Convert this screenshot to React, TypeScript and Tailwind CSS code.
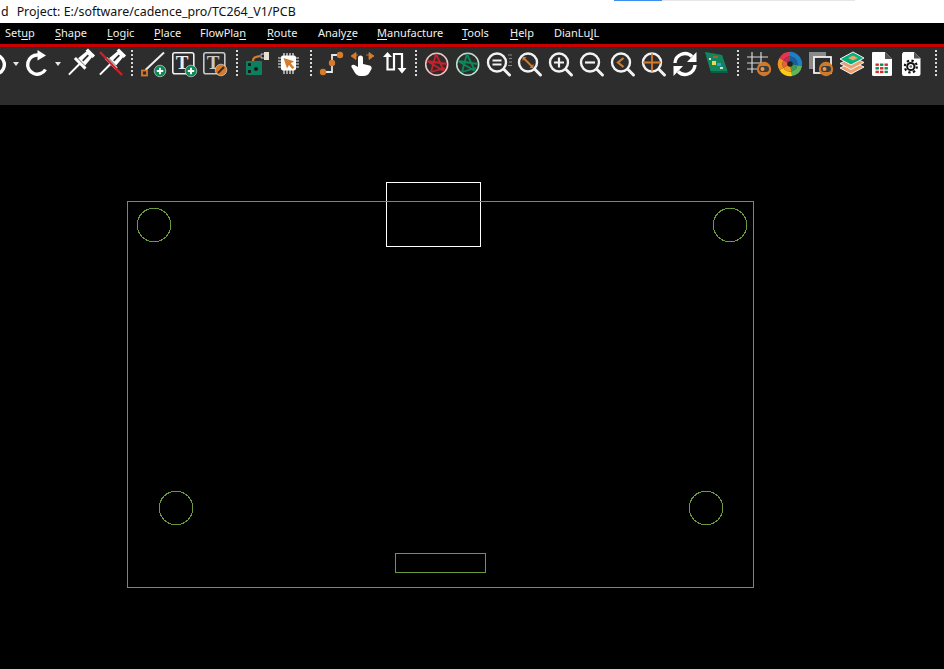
import type { ReactNode } from "react";

const menus = [
  { w: "w-[50px]", before: "Set", key: "u", after: "p" },
  { w: "w-[52px]", before: "", key: "S", after: "hape" },
  { w: "w-[47px]", before: "", key: "L", after: "ogic" },
  { w: "w-[46px]", before: "", key: "P", after: "lace" },
  { w: "w-[67px]", before: "FlowPla", key: "n", after: "" },
  { w: "w-[51px]", before: "", key: "R", after: "oute" },
  { w: "w-[59px]", before: "Analy", key: "z", after: "e" },
  { w: "w-[85px]", before: "", key: "M", after: "anufacture" },
  { w: "w-[48px]", before: "", key: "T", after: "ools" },
  { w: "w-[44px]", before: "", key: "H", after: "elp" },
  { w: "w-[60px]", before: "DianLu", key: "J", after: "L" },
];

const ORANGE = "#d67b2c";
const GREEN = "#0e8a55";

// 31x30 toolbar slot
function Icon({ children }: { children: ReactNode }) {
  return (
    <svg width="31" height="30" viewBox="0 0 31 30" className="shrink-0 overflow-visible">
      {children}
    </svg>
  );
}

function Sep() {
  return (
    <div className="w-[12px] h-[30px] shrink-0 flex justify-center pt-[1px]">
      <div className="w-[2px] h-[26px] bg-[repeating-linear-gradient(to_bottom,#d8d8d8_0,#d8d8d8_2px,transparent_2px,transparent_4px)]" />
    </div>
  );
}

function Caret({ w }: { w: string }) {
  return (
    <div className={`${w} h-[30px] shrink-0 flex justify-center items-center`}>
      <div className="w-0 h-0 border-x-[3px] border-x-transparent border-t-[4px] border-t-[#e8e8e8]" />
    </div>
  );
}

function Pin() {
  return (
    <g transform="rotate(45 15.5 15)">
      <rect x="10.5" y="-2" width="10" height="3.4" fill="#fff" />
      <path d="M11.5 1 H19.5 L20.5 12 H10.5 Z" fill="#fff" />
      <rect x="14.6" y="2.5" width="1.8" height="8" fill="#2d2d2d" />
      <rect x="8" y="12.5" width="15" height="3" fill="#fff" />
      <path d="M15.5 15 V30" stroke="#fff" strokeWidth="2" />
    </g>
  );
}

function Badge({ x, y, children, fill = GREEN }: { x: number; y: number; children: ReactNode; fill?: string }) {
  return (
    <g transform={`translate(${x} ${y})`}>
      <circle r="5.8" fill={fill} stroke="#e8e8e8" strokeWidth="0.6" />
      {children}
    </g>
  );
}

function Toggle({ x, y }: { x: number; y: number }) {
  return (
    <g transform={`translate(${x} ${y})`}>
      <circle r="7.2" fill="#cf7a2a" />
      <rect x="-5" y="-3" width="10" height="6" rx="3" fill="#3a3a3a" />
      <circle cx="-1.5" r="2" fill="#e89a50" />
    </g>
  );
}

function TBox({ stroke }: { stroke: string }) {
  return (
    <>
      <rect x="3.8" y="3.8" width="21" height="21" rx="2" fill="none" stroke={stroke} strokeWidth="1.6" />
      <text x="13" y="20" textAnchor="middle" fontFamily="Liberation Serif, serif" fontWeight="700" fontSize="19" fill={stroke}>
        T
      </text>
    </>
  );
}

function Net({ ring, line }: { ring: string; line: string }) {
  return (
    <>
      <circle cx="14.7" cy="15.3" r="11" fill="none" stroke={ring} strokeWidth="1.5" />
      <path d="M14 5 L22 22 M14 5 L9 23 M5 12 L25 15 M9 23 L23 19 M5 12 L22 22" fill="none" stroke={line} strokeWidth="1.8" />
    </>
  );
}

// magnifier frame shared by the zoom buttons
function Lens({ children }: { children?: ReactNode }) {
  return (
    <>
      <circle cx="13" cy="13.5" r="9" fill="none" stroke="#f2f2f2" strokeWidth="2.4" />
      <path d="M19.8 20.3 L25.5 26" stroke="#f2f2f2" strokeWidth="3" strokeLinecap="round" />
      {children}
    </>
  );
}

function wedge(r0: number, r1: number, a0: number, a1: number) {
  const p = (r: number, a: number) => {
    const t = ((a - 90) * Math.PI) / 180;
    return `${(15 + r * Math.cos(t)).toFixed(2)} ${(15 + r * Math.sin(t)).toFixed(2)}`;
  };
  return `M${p(r0, a0)} L${p(r1, a0)} A${r1} ${r1} 0 0 1 ${p(r1, a1)} L${p(r0, a1)} A${r0} ${r0} 0 0 0 ${p(r0, a0)} Z`;
}

const wheel = [
  { a: 0, b: 100, outer: "#1f7fc4", inner: "#15609a" },
  { a: 100, b: 170, outer: "#62b45a", inner: "#3c9a5a" },
  { a: 170, b: 240, outer: "#fbc918", inner: "#f09a1e" },
  { a: 240, b: 300, outer: "#f39222", inner: "#e8603a" },
  { a: 300, b: 360, outer: "#e8344c", inner: "#c02a5c" },
];

function ColorWheel() {
  return (
    <>
      {wheel.map((s) => (
        <g key={s.a}>
          <path d={wedge(7.5, 12.2, s.a, s.b)} fill={s.outer} />
          <path d={wedge(2, 7.5, s.a, s.b)} fill={s.inner} />
        </g>
      ))}
      <circle cx="15" cy="15" r="2.8" fill="#222" />
    </>
  );
}

const sheetColors = ["#d62b2b", "#0e8a55", "#d62b2b", "#0e8a55", "#d62b2b", "#0e8a55", "#d62b2b", "#d62b2b", "#0e8a55"];

function Toolbar() {
  return (
    <div className="h-[58px] bg-[#2d2d2d] pt-[2px] overflow-hidden">
      <div className="flex ml-[-20px] w-[980px]">
        {/* undo */}
        <Icon>
          <g transform="matrix(-1 0 0 1 30 0)">
            <path d="M23.5 20.5 A9.6 9.6 0 1 1 16 6" fill="none" stroke="#fff" strokeWidth="3.4" />
            <path d="M15.5 1 L24 6.5 L15.5 11.5 Z" fill="#fff" />
          </g>
        </Icon>
        <Caret w="w-[10px]" />
        {/* redo */}
        <Icon>
          <path d="M24.5 20.5 A9.6 9.6 0 1 1 17 6" fill="none" stroke="#fff" strokeWidth="3.4" />
          <path d="M16.5 1 L25 6.5 L16.5 11.5 Z" fill="#fff" />
        </Icon>
        <Caret w="w-[12px]" />
        <Icon>
          <Pin />
        </Icon>
        <Icon>
          <Pin />
          <path d="M5 3 L27 26" stroke="#cf2027" strokeWidth="2.4" />
        </Icon>
        <Sep />

        {/* add line */}
        <Icon>
          <path d="M7.5 21 L26 3.5" stroke="#f0f0f0" strokeWidth="2" />
          <rect x="4" y="21.5" width="5" height="5" fill="#2d2d2d" stroke={ORANGE} strokeWidth="1.8" />
          <Badge x={22} y={22}>
            <path d="M-3.2 0 H3.2 M0 -3.2 V3.2" stroke="#fff" strokeWidth="1.9" />
          </Badge>
        </Icon>
        <Icon>
          <TBox stroke="#f0f0f0" />
          <Badge x={22} y={22}>
            <path d="M-3.2 0 H3.2 M0 -3.2 V3.2" stroke="#fff" strokeWidth="1.9" />
          </Badge>
        </Icon>
        <Icon>
          <TBox stroke="#c8c8c8" />
          <Badge x={21} y={21} fill={ORANGE}>
            <path d="M-3 3 L3 -3" stroke="#3a2a1a" strokeWidth="2" />
          </Badge>
        </Icon>
        <Sep />

        {/* board with connector */}
        <Icon>
          <rect x="3" y="12" width="16" height="14" rx="1" fill="#0c7f5f" />
          <rect x="5" y="14" width="3" height="3" fill="#1a1a1a" />
          <circle cx="13" cy="20" r="2" fill="#1a1a1a" />
          <rect x="5" y="21" width="3" height="3" fill="#1a1a1a" />
          <path d="M10 12 C10 8 13 8 17 7" fill="none" stroke={ORANGE} strokeWidth="2.2" />
          <rect x="21" y="3" width="5" height="8" fill="#e8e0d0" />
          <path d="M18 5 V9 M21 5 H18 M21 9 H18" stroke="#d8d8d8" strokeWidth="0.9" />
        </Icon>
        {/* chip select */}
        <Icon>
          <path
            d="M10 4 V25 M13 4 V25 M16 4 V25 M19 4 V25 M4 9 H25 M4 12 H25 M4 15 H25 M4 18 H25"
            stroke="#f0f0f0"
            strokeWidth="1.2"
          />
          <rect x="7" y="6.5" width="15" height="15" rx="2" fill="#fff" />
          <path d="M9.5 9 L20 12.2 L16.8 14.6 L20.5 18.5 L18.3 20 L15 16 L13 19.5 Z" fill={ORANGE} />
        </Icon>
        <Sep />

        {/* route */}
        <Icon>
          <path d="M6 23 H15 V6 H23" fill="none" stroke="#e8e8e8" strokeWidth="1.8" />
          <circle cx="6" cy="23" r="3.2" fill={ORANGE} />
          <circle cx="15" cy="14" r="3.2" fill={ORANGE} />
          <circle cx="23" cy="6" r="3.2" fill={ORANGE} />
        </Icon>
        {/* slide hand */}
        <Icon>
          <path
            d="M10 9 a2.5 2.5 0 0 1 5 0 V15 l6.5 1.5 c2 .5 2.5 2 2 3.5 l-2 3.5 c-1 2 -3 3.5 -6 3.5 h-3 c-3 0 -5 -2 -6 -4 l-3 -5 c-.8 -1.5 1 -3 3 -2 l3.5 2 Z"
            fill="#fff"
          />
          <path d="M3 7 L8 3.5 V10.5 Z M8 6 H10 M26 7 L21 3.5 V10.5 Z M21 6 H18" fill={ORANGE} stroke={ORANGE} strokeWidth="0.8" />
        </Icon>
        {/* swap */}
        <Icon>
          <path d="M8.5 6 V20.5 H15 V5 H23 V20" fill="none" stroke="#fff" strokeWidth="2.2" />
          <path d="M4 8 L8.5 3 L13 8 Z M18.5 19 H27.5 L23 24.5 Z" fill="#fff" />
        </Icon>
        <Sep />

        <Icon>
          <Net ring="#f0c8c8" line="#c8202c" />
        </Icon>
        <Icon>
          <Net ring="#bfe0d0" line="#0a8a5a" />
        </Icon>
        <Icon>
          <Lens>
            <path d="M8.5 11.5 H17.5 M8.5 15.5 H17.5" stroke="#f2f2f2" strokeWidth="1.9" />
            <path d="M24 6 H28 M25 9.5 H28 M25 13 H28 M24 16.5 H28" stroke="#888" strokeWidth="1" />
          </Lens>
        </Icon>
        <Icon>
          <Lens>
            <path d="M9 9.5 L17 17.5" stroke={ORANGE} strokeWidth="1.8" />
            <path d="M7.5 8 H11.5 L7.5 12 Z M18.5 19 H14.5 L18.5 15 Z" fill={ORANGE} />
          </Lens>
        </Icon>
        <Icon>
          <Lens>
            <path d="M8 13.5 H18 M13 8.5 V18.5" stroke="#f2f2f2" strokeWidth="2.2" />
          </Lens>
        </Icon>
        <Icon>
          <Lens>
            <path d="M8 13.5 H18" stroke="#f2f2f2" strokeWidth="2.2" />
          </Lens>
        </Icon>
        <Icon>
          <Lens>
            <path d="M15.5 9 L10 13.5 L15.5 18" fill="none" stroke={ORANGE} strokeWidth="2.2" />
          </Lens>
        </Icon>
        <Icon>
          <Lens>
            <path d="M4 13.5 H22 M13 4.5 V22.5" stroke={ORANGE} strokeWidth="1.8" />
          </Lens>
        </Icon>
        {/* refresh */}
        <Icon>
          <path d="M5 14 A10 10 0 0 1 22 7.5" fill="none" stroke="#fff" strokeWidth="3.4" />
          <path d="M26.5 3 V13 H17 Z" fill="#fff" />
          <path d="M25 16 A10 10 0 0 1 8 22.5" fill="none" stroke="#fff" strokeWidth="3.4" />
          <path d="M3.5 27 V17 H13 Z" fill="#fff" />
        </Icon>
        {/* pcb */}
        <Icon>
          <path d="M4 3 L21 6 L27 24 L10 24 Z" fill="#0b5f44" />
          <path d="M4 3 L21 6 L26.5 22 L9.5 22 Z" fill="#12855c" />
          <rect x="12" y="7" width="5" height="2" fill="#b05a3a" />
          <rect x="11" y="12" width="4" height="4" fill="#e8d85a" />
          <rect x="16" y="14" width="4" height="3" fill="#3a9ad0" />
          <rect x="8" y="9" width="2" height="2" fill="#cfe8d8" />
          <rect x="19" y="18" width="3" height="2" fill="#cfe8d8" />
        </Icon>
        <Sep />

        {/* grid toggle */}
        <Icon>
          <path d="M8 3 V24 M17 3 V20 M3 8 H24 M3 14 H22 M3 20 H20" stroke="#d8d8d8" strokeWidth="1.2" />
          <Toggle x={20} y={20} />
        </Icon>
        <Icon>
          <ColorWheel />
        </Icon>
        {/* layer visibility */}
        <Icon>
          <rect x="3" y="3" width="17" height="17" fill="#8a8a8a" />
          <rect x="8" y="8" width="17" height="16" fill="#2d2d2d" stroke="#f0f0f0" strokeWidth="1.8" />
          <Toggle x={20} y={20} />
        </Icon>
        {/* layer stack */}
        <Icon>
          <path d="M3 19 L16 13 L27 18 L14 25 Z" fill="#eba070" stroke="#f5f5f5" strokeWidth="1" />
          <path d="M3 14.5 L16 8 L27 13.5 L14 20.5 Z" fill="#eba070" stroke="#f5f5f5" strokeWidth="1" />
          <path d="M3 10 L16 3 L27 9 L14 16 Z" fill="#02b27a" stroke="#f5f5f5" strokeWidth="1" />
          <path d="M11 9 L16 6.5 L21 9 L16 11.5 Z" fill="#eba070" />
        </Icon>
        {/* report sheet */}
        <Icon>
          <path d="M4.5 3 H17 L24 10 V25.5 a1.5 1.5 0 0 1 -1.5 1.5 H5.5 a1.5 1.5 0 0 1 -1.5 -1.5 V3.5 Z" fill="#fff" />
          <path d="M17 3 V10 H24 Z" fill="#555" />
          {sheetColors.map((c, i) => (
            <rect key={i} x={7.5 + (i % 3) * 4.5} y={14.5 + Math.floor(i / 3) * 3.6} width="3.4" height="2.4" fill={c} />
          ))}
        </Icon>
        {/* settings sheet */}
        <Icon>
          <path d="M4.5 3 H15 L21.5 9.5 V25 a2 2 0 0 1 -2 2 H5 a2 2 0 0 1 -2 -2 V4.5 Z" fill="#fff" />
          <path d="M15 3 V9.5 H21.5 Z" fill="#555" />
          <circle cx="11.8" cy="17.5" r="4.6" fill="#111" />
          <circle cx="11.8" cy="17.5" r="6" fill="none" stroke="#111" strokeWidth="2.2" strokeDasharray="2.3 2.4" />
          <circle cx="11.8" cy="17.5" r="2.6" fill="#fff" />
          <circle cx="11.8" cy="17.5" r="1.3" fill="#666" />
        </Icon>
        <Sep />
      </div>
    </div>
  );
}

function Board() {
  // coordinates are page pixels minus the 105px header
  const green = "#6a9a3c";
  return (
    <svg width="944" height="564" viewBox="0 105 944 564" className="block" fill="none" shapeRendering="crispEdges">
      <rect x="386.5" y="182.5" width="94" height="64" stroke="#fff" />
      <rect x="127.5" y="201.5" width="626" height="386" stroke={green} />
      <rect x="395.5" y="553.5" width="90" height="19" stroke={green} />
      <g stroke={green}>
        <circle cx="154" cy="225" r="16.8" />
        <circle cx="730" cy="225" r="16.8" />
        <circle cx="176" cy="508" r="16.8" />
        <circle cx="706" cy="508" r="16.8" />
      </g>
    </svg>
  );
}

export default function App() {
  return (
    <div className="w-[944px] h-[669px] overflow-hidden bg-black font-['Noto_Sans','Open_Sans',sans-serif]">
      {/* title bar */}
      <div className="relative h-[23px] bg-white pl-[1px] text-[12.4px] leading-[23px] text-[#111] whitespace-pre">
        <span>d</span>
        <span className="ml-[8px]">Project: E:/software/cadence_pro/TC264_V1/PCB</span>
        <div className="absolute left-[614px] top-0 flex h-[1px]">
          <div className="w-[48px] bg-[#3b8fef]" />
          <div className="w-[193px] bg-[#e6e6e6]" />
        </div>
      </div>

      {/* menu bar */}
      <div className="flex h-[21px] items-center bg-black pl-[5px] text-[11px] text-[#f0f0f0]">
        {menus.map((m) => (
          <span key={m.before + m.key} className={`${m.w} shrink-0 whitespace-pre`}>
            {m.before}
            <u className="underline-offset-2">{m.key}</u>
            {m.after}
          </span>
        ))}
      </div>
      <div className="h-[3px] bg-[#c80000]" />

      <Toolbar />
      <Board />
    </div>
  );
}
